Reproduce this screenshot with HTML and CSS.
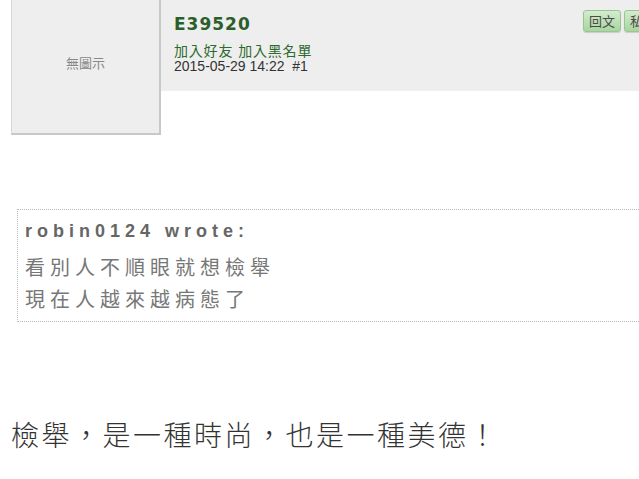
FILE: index.html
```html
<!DOCTYPE html>
<html lang="zh-Hant">
<head>
    <meta charset="UTF-8" />
    <meta name="viewport" content="width=device-width, initial-scale=1.0">
    <title>回覆</title>
    <link rel="stylesheet" href="styles.css">
</head>
<body>
    <div class="post">
        <div class="post-head">
            <div class="avatar">無圖示</div>
            <div class="info">
                <div class="meta">
                    <div class="author">E39520</div>
                    <div class="links"><a href="#">加入好友</a> <a href="#">加入黑名單</a></div>
                    <div class="date">2015-05-29 14:22&nbsp;&nbsp;#1</div>
                </div>
                <div class="actions">
                    <button class="btn">回文</button>
                    <button class="btn">私訊</button>
                </div>
            </div>
        </div>

        <div class="quote">
            <div class="quote-title">robin0124 wrote:</div>
            <div class="quote-line">看別人不順眼就想檢舉</div>
            <div class="quote-line">現在人越來越病態了</div>
        </div>

        <div class="content">檢舉，是一種時尚，也是一種美德！</div>
    </div>
</body>
</html>
```

FILE: styles.css
```css
html, body {
    overflow: hidden;
}

body {
    margin: 0;
    background-color: #fff;
    font-family: "Liberation Sans", "Noto Sans CJK TC", sans-serif;
    color: #333;
}

.post {
    padding-left: 11px;
}

.post-head {
    display: flex;
    align-items: flex-start;
}

.avatar {
    box-sizing: border-box;
    flex: none;
    width: 150px;
    height: 135px;
    padding-bottom: 8px;
    display: flex;
    align-items: center;
    justify-content: center;
    background-color: #eee;
    border-left: 1px solid #d6d6d6;
    border-right: 2px solid #c8c8c8;
    border-bottom: 2px solid #c8c8c8;
    font-family: "Noto Sans CJK TC", sans-serif;
    font-size: 13px;
    color: #888;
}

.info {
    flex: 1;
    height: 91px;
    display: flex;
    overflow: hidden;
    background-color: #eee;
}

.meta {
    flex: none;
    box-sizing: border-box;
    width: 422px;
    padding: 13px 0 0 13px;
}

.author {
    font-family: "DejaVu Sans", sans-serif;
    font-weight: bold;
    font-size: 17px;
    letter-spacing: 1px;
    line-height: 22px;
    color: #2c5e2c;
}

.links {
    display: flex;
    gap: 5px;
    margin-top: 9px;
    font-family: "Liberation Sans", "Noto Sans CJK TC", sans-serif;
    font-size: 14px;
    line-height: 15px;
    letter-spacing: 0.8px;
}

.links a {
    color: #2d6a2d;
    text-decoration: none;
}

.date {
    font-size: 14px;
    line-height: 14px;
    color: #333;
}

.actions {
    flex: none;
    display: flex;
    gap: 3px;
    padding-top: 10px;
}

.btn {
    width: 38px;
    height: 22px;
    padding: 0;
    border: 1px solid #98c690;
    border-radius: 3px;
    background: linear-gradient(#d3ecce, #a8d5a0);
    box-shadow: 0 1px 1px rgba(0, 0, 0, 0.15);
    font-family: "Noto Sans CJK TC", sans-serif;
    font-size: 13px;
    line-height: 20px;
    color: #4a4a4a;
}

.quote {
    width: 700px;
    margin: 74px 0 0 6px;
    padding: 9px 7px 6px;
    border: 1px dotted #bbb;
}

.quote-title {
    font-weight: bold;
    font-size: 18px;
    line-height: 24px;
    letter-spacing: 5px;
    color: #666;
    margin-bottom: 8px;
}

.quote-line {
    font-family: "Noto Sans CJK TC", sans-serif;
    font-size: 20px;
    line-height: 32px;
    letter-spacing: 5px;
    color: #777;
}

.content {
    margin-top: 92px;
    font-family: "Noto Sans CJK TC", sans-serif;
    font-weight: 300;
    font-size: 28px;
    line-height: 40px;
    letter-spacing: 2.5px;
    color: #333;
}
```
